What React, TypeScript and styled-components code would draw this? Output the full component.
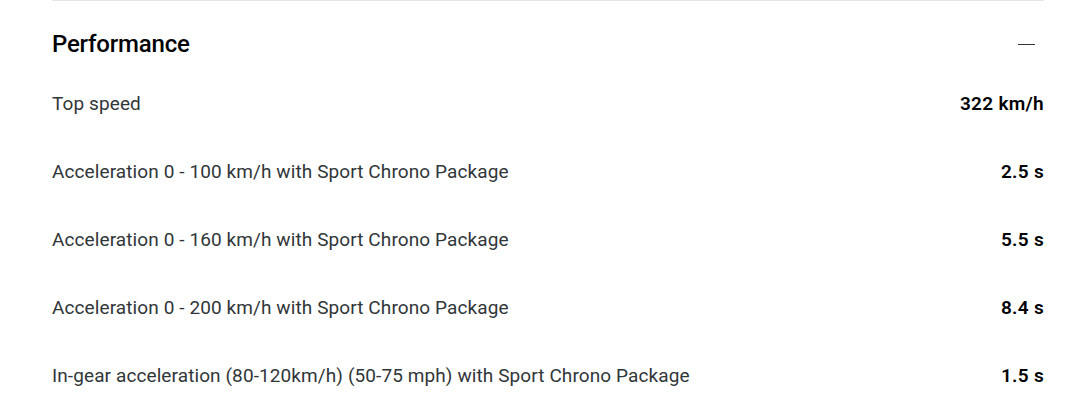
import styled, { createGlobalStyle } from 'styled-components';

const GlobalStyle = createGlobalStyle`
    body {
        margin: 0;
        background: #fff;
        font-family: Roboto, "Liberation Sans", sans-serif;
        color: #010205;
    }
`;

const specs = [
    { label: 'Top speed', value: '322 km/h' },
    { label: 'Acceleration 0 - 100 km/h with Sport Chrono Package', value: '2.5 s' },
    { label: 'Acceleration 0 - 160 km/h with Sport Chrono Package', value: '5.5 s' },
    { label: 'Acceleration 0 - 200 km/h with Sport Chrono Package', value: '8.4 s' },
    { label: 'In-gear acceleration (80-120km/h) (50-75 mph) with Sport Chrono Package', value: '1.5 s' },
];

export default function App() {
    return (
        <>
            <GlobalStyle />
            <Section>
                <Header>
                    <Title>Performance</Title>
                    <Toggle aria-label="Collapse">
                        <span></span>
                    </Toggle>
                </Header>
                <List>
                    {specs.map((s) => (
                        <Row key={s.label}>
                            <Label>{s.label}</Label>
                            <Value>{s.value}</Value>
                        </Row>
                    ))}
                </List>
            </Section>
        </>
    );
}

const Section = styled.section`
    width: 992px;
    margin-left: 52px;
    border-top: 1px solid #e3e4e5;
`;

const Header = styled.div`
    display: flex;
    align-items: center;
    justify-content: space-between;
    height: 86px;
`;

const Title = styled.h2`
    margin: 0;
    font-size: 24px;
    font-weight: 500;
    letter-spacing: -0.2px;
    color: #010205;
`;

const Toggle = styled.button`
    width: 24px;
    height: 24px;
    margin-right: 6px;
    padding: 0;
    border: 0;
    background: none;
    display: flex;
    align-items: center;
    justify-content: center;

    span {
        display: block;
        width: 17px;
        height: 1px;
        background: #313639;
    }
`;

const List = styled.div`
    display: flex;
    flex-direction: column;
    margin-top: -1px;
`;

const Row = styled.div`
    display: flex;
    justify-content: space-between;
    align-items: center;
    height: 34px;
    margin-bottom: 34px;
`;

const Label = styled.span`
    font-size: 19px;
    color: #313639;
    letter-spacing: 0.1px;
`;

const Value = styled.span`
    font-size: 19px;
    font-weight: 600;
    color: #010205;
    letter-spacing: 0.3px;
`;
